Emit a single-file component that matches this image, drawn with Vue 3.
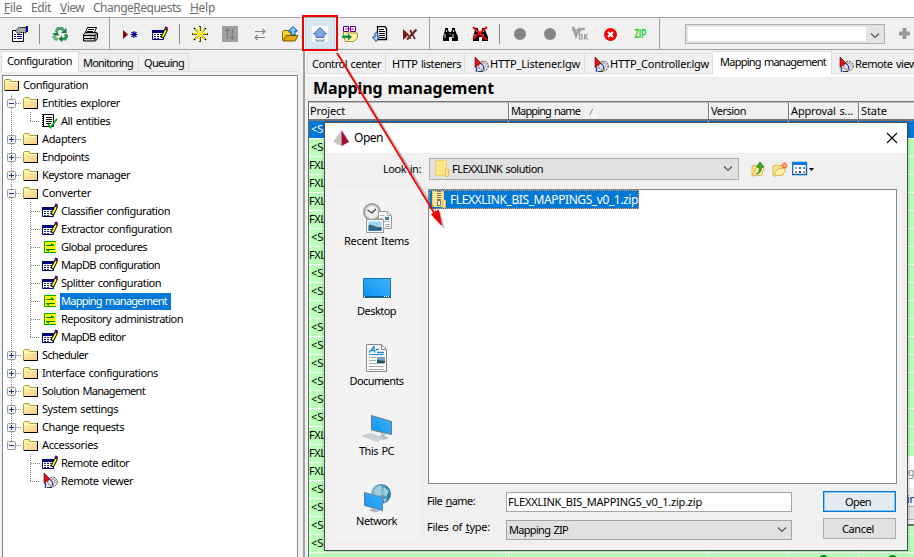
<script setup>
// Spreads or tightens a label so that it takes the given number of pixels.
const vFit = {
  mounted(el, { value }) {
    const n = el.textContent.length
    if (value && n) el.style.letterSpacing = (value - el.getBoundingClientRect().width) / n + 'px'
  },
}

const menu = [
  { k: 'F', rest: 'ile', w: 18 },
  { k: '', rest: 'Edit', w: 20 },
  { k: 'V', rest: 'iew', w: 24 },
  { pre: 'Change', k: 'R', rest: 'equests', w: 88 },
  { k: 'H', rest: 'elp', w: 25 },
]

const toolbar = [
  'props', '|', 'recycle', 'printer', '||', 'play', 'table', '|', 'star', 'sort', 'swap', 'folderup',
  'upload', 'export', 'doc', 'del', '||', 'find', 'findx', '|', 'dot', 'dot', 'vok', 'stop', 'zip', '||',
]

const leftTabs = [
  { t: 'Configuration', w: 65, on: true },
  { t: 'Monitoring', w: 50 },
  { t: 'Queuing', w: 40 },
]

// g: guide cells drawn before the icon; p/m expander, v vertical, t branch, l last branch, e empty
const tree = [
  { t: 'Configuration', w: 65, i: 'folder', g: [] },
  { t: 'Entities explorer', w: 78, i: 'folder', g: ['m'] },
  { t: 'All entities', w: 49, i: 'entities', g: ['v', 'l'] },
  { t: 'Adapters', w: 44, i: 'folder', g: ['p'] },
  { t: 'Endpoints', w: 47, i: 'folder', g: ['p'] },
  { t: 'Keystore manager', w: 88, i: 'folder', g: ['p'] },
  { t: 'Converter', w: 49, i: 'folder', g: ['m'] },
  { t: 'Classifier configuration', w: 109, i: 'table', g: ['v', 't'] },
  { t: 'Extractor configuration', w: 111, i: 'table', g: ['v', 't'] },
  { t: 'Global procedures', w: 86, i: 'arrows', g: ['v', 't'] },
  { t: 'MapDB configuration', w: 99, i: 'table', g: ['v', 't'] },
  { t: 'Splitter configuration', w: 100, i: 'table', g: ['v', 't'] },
  { t: 'Mapping management', w: 106, i: 'arrows', g: ['v', 't'], sel: true },
  { t: 'Repository administration', w: 122, i: 'arrows', g: ['v', 't'] },
  { t: 'MapDB editor', w: 64, i: 'table', g: ['v', 'l'] },
  { t: 'Scheduler', w: 46, i: 'folder', g: ['p'] },
  { t: 'Interface configurations', w: 116, i: 'folder', g: ['p'] },
  { t: 'Solution Management', w: 103, i: 'folder', g: ['p'] },
  { t: 'System settings', w: 76, i: 'folder', g: ['p'] },
  { t: 'Change requests', w: 82, i: 'folder', g: ['p'] },
  { t: 'Accessories', w: 56, i: 'folder', g: ['x'] },
  { t: 'Remote editor', w: 68, i: 'table', g: ['e', 't'] },
  { t: 'Remote viewer', w: 72, i: 'remote', g: ['e', 'l'] },
]

const rightTabs = [
  { t: 'Control center', w: 69, c: 'a' },
  { t: 'HTTP listeners', w: 69, c: 'b' },
  { t: 'HTTP_Listener.lgw', w: 90, c: 'c', icon: true },
  { t: 'HTTP_Controller.lgw', w: 99, c: 'd', icon: true },
  { t: 'Mapping management', w: 106, c: 'e', on: true },
  { t: 'Remote viewer', w: 72, c: 'f', icon: true },
]

const columns = [
  { t: 'Project', w: 35, c: 'wide' },
  { t: 'Mapping name', w: 69, c: 'wide', sort: true },
  { t: 'Version', w: 35, c: 'mid' },
  { t: 'Approval s...', w: 62, c: 'small' },
  { t: 'State', w: 26, c: 'last' },
]

const kinds = 'SSFFFFSFSSSSSSSSSFFFSSSS '.split('')
const projects = { S: '<Solution>', F: 'FXL', ' ': '' }

const places = [
  { t: 'Recent Items', w: 65, i: 'recent' },
  { t: 'Desktop', w: 39, i: 'desktop' },
  { t: 'Documents', w: 54, i: 'documents' },
  { t: 'This PC', w: 35, i: 'pc' },
  { t: 'Network', w: 41, i: 'network' },
]
</script>

<template>
  <div class="app">
    <svg class="defs" width="0" height="0">
      <defs>
        <linearGradient id="fy" x1="0" y1="0" x2="1" y2="1">
          <stop offset="0" stop-color="#fff9a8" /><stop offset="1" stop-color="#f6c98a" />
        </linearGradient>
        <linearGradient id="blue" x1="0" y1="1" x2="1" y2="0">
          <stop offset="0" stop-color="#0c93f2" /><stop offset="1" stop-color="#43b2fa" />
        </linearGradient>
        <radialGradient id="globeg" cx=".35" cy=".4">
          <stop offset="0" stop-color="#c3e4f2" /><stop offset="1" stop-color="#2e7fa6" />
        </radialGradient>
      </defs>
      <symbol id="folder" viewBox="0 0 16 16">
        <path d="M.5 13.500V3.500l1-1h4.500l1 2h7.500v9z" fill="url(#fy)" stroke="#a8a030" />
        <path d="M1.500 5.500h12" stroke="#fffbd0" />
        <path d="M14.500 4v9.500H1" fill="none" stroke="#000" />
      </symbol>
      <symbol id="entities" viewBox="0 0 16 16">
        <path d="M1.500 1.500h10v12h-10z" fill="#fff" stroke="#000" />
        <path d="M1 1v13" stroke="#000" stroke-dasharray="1 1" stroke-width="2" />
        <path d="M4 4.500h6M4 6.500h6M4 8.500h6M4 10.500h5" stroke="#000" />
        <path d="M6 11l2.500 3.500L15 6" fill="none" stroke="#00a020" stroke-width="1.700" />
      </symbol>
      <symbol id="table" viewBox="0 0 16 16">
        <path d="M.5 4.500h11v9H.5z" fill="#fff" stroke="#000080" />
        <path d="M0 4h12v3H0z" fill="#000080" />
        <path d="M2 8.500h8M2 10.500h8M2 12.500h6" stroke="#222268" stroke-dasharray="2 1" />
        <path d="M10 12l4.500-9" stroke="#000" stroke-width="3.600" />
        <path d="M10.500 11l3.500-7" stroke="#ffff20" stroke-width="1.700" />
        <path d="M13.700 3l1.300-2" stroke="#600060" stroke-width="3" />
      </symbol>
      <symbol id="arrows" viewBox="0 0 16 16">
        <path d="M2 2h12v12H2z" fill="#ff0" />
        <path d="M2.500 14V2.500H14M2 13.500h12" fill="none" stroke="#00b000" />
        <path d="M4 6.500h8M4 10.500h9" stroke="#008000" />
        <path d="M9 4l3.500 2.500H9zM7 13l-3.500-2.500H7z" fill="#008000" />
      </symbol>
      <symbol id="remote" viewBox="0 0 16 16">
        <circle cx="10.500" cy="9" r="4.800" fill="#e2e2e2" stroke="#555" stroke-dasharray="2 .8" />
        <path d="M8 7c3-2 5 0 6 1M8 12c2 0 4-1 5-3" fill="none" stroke="#999" />
        <path d="M6.500 6l3.500 2 1 5" fill="none" stroke="#2030c0" />
        <path d="M2 0l6 6-6 4.500z" fill="#e01018" stroke="#500" stroke-width=".6" />
        <path d="M3.500 10v5" stroke="#3040c0" stroke-width="1.500" /><path d="M5 14.500h5" stroke="#333" />
      </symbol>
      <symbol id="props" viewBox="0 0 16 16">
        <path d="M.5 4.500h11v11H.5z" fill="#fff" stroke="#000" />
        <path d="M2 8.500h2M5 8.500h5M2 10.500h2M5 10.500h5M2 12.500h2M5 12.500h5" stroke="#000080" />
        <path d="M3 5l4-3.500h7v5H9l-3 1z" fill="#aaa" stroke="#000" stroke-dasharray="1.500 .6" />
        <path d="M14 0h2v6h-2z" fill="#0000c0" />
      </symbol>
      <symbol id="recycle" viewBox="0 0 16 16">
        <path d="M4 6l2-3.500h4l1.500 2" fill="none" stroke="#4aa468" stroke-width="3.200" />
        <path d="M9 7h5.500V2z" fill="#147a38" />
        <path d="M13.500 8l1 2.500-1.500 2.500h-3" fill="none" stroke="#279c4e" stroke-width="3.200" />
        <path d="M10 9.500V16l-3.500-3z" fill="#147a38" />
        <path d="M6 13H3.500L2 11l1.500-3" fill="none" stroke="#6aba80" stroke-width="3.200" />
        <path d="M0 8l5.500-2L7 10z" fill="#147a38" />
      </symbol>
      <symbol id="printer" viewBox="0 0 16 16">
        <path d="M5.500 1.500h9l-2.500 6H3z" fill="#fff" stroke="#000" />
        <path d="M6 3.500h6M5 5.500h6" stroke="#000" />
        <path d="M1.500 8.500l2-2h11l1 1v5l-2 2.500h-12z" fill="#bbb" stroke="#000" />
        <path d="M1 9.500h12v5M1 12.500h12M13 9l3-2" fill="none" stroke="#000" />
        <path d="M3 11h5" stroke="#fff" />
      </symbol>
      <symbol id="play" viewBox="0 0 16 16">
        <path d="M1 4l5 4.500L1 13z" fill="#900000" />
        <path d="M12 5v7M8.500 8.500h7M9.500 6l5 5M14.500 6l-5 5" stroke="#000080" stroke-width="1.100" />
      </symbol>
      <symbol id="star" viewBox="0 0 16 16">
        <path d="M8 0v5M8 11v5M0 8h5M11 8h5M2 2l4 4M10 10l4 4M14 2l-4 4M6 10l-4 4" stroke="#000" stroke-width="1.600" />
        <path d="M7.500 1v14M1 7.500h14M3 3l10 10M13 3L3 13" stroke="#fff000" stroke-width="1.400" />
      </symbol>
      <symbol id="sort" viewBox="0 0 16 16">
        <path d="M0 0h16v16H0z" fill="#a0a0a0" />
        <path d="M5.500 13V3M3.500 5l2-2 2 2M10.500 3v10M8.500 11l2 2 2-2" fill="none" stroke="#7c7c7c" stroke-width="1.300" />
      </symbol>
      <symbol id="swap" viewBox="0 0 16 16">
        <path d="M3 5.500h10M10.500 3L13 5.500 10.500 8M13 11.500H3M5.500 9L3 11.500 5.500 14" fill="none" stroke="#858585" stroke-width="1.100" />
      </symbol>
      <symbol id="folderup" viewBox="0 0 16 16">
        <path d="M.5 14.500v-9l1-1H6l1 2h5v3" fill="#ffd52a" stroke="#8a6900" />
        <path d="M1 15l3-5.500h12L13 15z" fill="#e6a90c" stroke="#7a5800" />
        <path d="M11 .5l4.500 4.500H13v4H9V5H6.500z" fill="#75cfff" stroke="#104a9c" />
      </symbol>
      <symbol id="upload" viewBox="0 0 16 16">
        <path d="M0 0h16v16H0z" fill="#fff" />
        <path d="M8 1.500L14.500 8H12v3.500H4V8H1.500z" fill="#82a7e4" stroke="#3f69bd" />
        <path d="M4 13v2h8v-2" fill="#ddd" stroke="#7186ad" />
      </symbol>
      <symbol id="export" viewBox="0 0 16 16">
        <path d="M1.500 9V6l2-1 2 2h10v5l-4 3.500h-8z" fill="#fff2a0" stroke="#b08a36" />
        <path d="M1.500.500h5v5h-5zM8.500.500h5v5h-5z" fill="#fff" stroke="#50008c" />
        <path d="M3 3h9" stroke="#d000c8" />
        <path d="M0 9.500h6V7.500l4 3.500-4 3.500v-2.500H0z" fill="#1a8a50" />
      </symbol>
      <symbol id="doc" viewBox="0 0 16 16">
        <path d="M5.500.5h7l2 2v11h-9z" fill="#fff" stroke="#000" stroke-width="1.300" />
        <path d="M7 3.500h5M7 5.500h6M7 7.500h6M7 9.500h6M7 11.500h6" stroke="#000" />
        <path d="M3 7v4H.5L4 15.500 7.500 11H5.500V7z" fill="#a9d6ff" stroke="#205090" />
      </symbol>
      <symbol id="del" viewBox="0 0 16 16">
        <path d="M1 3l6 5.500L1 14z" fill="#7b1818" />
        <path d="M5 13.500l9.500-10" stroke="#7a1c1c" stroke-width="2.200" />
        <path d="M8 4l5 9" stroke="#7a1c1c" stroke-width="1.600" />
        <path d="M6 9l3 4" stroke="#444" stroke-width="1.200" />
      </symbol>
      <symbol id="find" viewBox="0 0 16 16">
        <path d="M3 2h3v2l1 2h2l1-2V2h3v2l3 7v4h-6v-4H7v4H1v-4l2-7z" fill="#000" />
        <path d="M3 8v4M11 8v4M4.500 4v2M11.500 4v2M7.500 8h1" stroke="#e0e0e0" />
      </symbol>
      <symbol id="findx" viewBox="0 0 16 16">
        <use href="#find" width="16" height="16" />
        <path d="M1 1l14 13M15 1L1 13" stroke="#f00000" stroke-width="2" />
      </symbol>
      <symbol id="dot" viewBox="0 0 16 16"><circle cx="8" cy="8" r="6" fill="#858585" /></symbol>
      <symbol id="vok" viewBox="0 0 16 16">
        <path d="M1 1l3 9 3-7h6" fill="none" stroke="#a2a2a2" stroke-width="2.500" />
        <path d="M0 4h8M9 2L7 8" fill="none" stroke="#a2a2a2" stroke-width="1.500" />
        <path d="M7.500 8.500H10v4.500H7.500zM12.500 8v5.500M15.500 8L13 10.700l2.800 2.800" fill="none" stroke="#999" stroke-width="1.200" />
      </symbol>
      <symbol id="stop" viewBox="0 0 16 16">
        <circle cx="8.500" cy="8.500" r="6.500" fill="#f00000" />
        <path d="M6 6l5 5M11 6l-5 5" stroke="#fff" stroke-width="2.200" />
      </symbol>
      <symbol id="recent" viewBox="0 0 32 32">
        <circle cx="11" cy="11" r="8" fill="#f0f0f0" stroke="#a0a0a0" stroke-width="2.200" />
        <circle cx="11" cy="11" r="6" fill="none" stroke="#aaa" stroke-dasharray="1 2.140" />
        <path d="M6.500 9l4.500 3 4-4" fill="none" stroke="#444" stroke-width="1.200" />
        <path d="M17.500 10.500h9l4 4v13h-13z" fill="#fafafa" stroke="#999" />
        <path d="M26.500 10.500v4h4M19 14.500h4M19 17.500h3M19 20.500h9M24 23.500h5M24 25.500h5" fill="none" stroke="#aaa" />
        <path d="M24 16h4v3h-4z" fill="#337caf" />
        <path d="M5.500 18.500h17v13h-17z" fill="#f7f7f7" stroke="#999" />
        <path d="M7.500 20.500h13v9h-13z" fill="#a2d5f5" />
        <path d="M7.500 24c5-1 6 3 13 2v3.500h-13z" fill="#366d7d" /><path d="M7.500 28l13-1v2.500h-13z" fill="#215ea0" />
      </symbol>
      <symbol id="desktop" viewBox="0 0 32 32">
        <path d="M2.500 7.500h27v19h-27z" fill="url(#blue)" stroke="#1772b2" />
        <path d="M2 25.500h28" stroke="#15567f" /><path d="M3 25.500h2M23 25.500h5" stroke="#fff" stroke-dasharray="1 1" />
      </symbol>
      <symbol id="documents" viewBox="0 0 32 32">
        <path d="M5.500 3.500h15l5 5v22h-20z" fill="#fbfbfb" stroke="#888" />
        <path d="M20.500 3.500v5h5" fill="none" stroke="#888" />
        <path d="M8 13.500h15" stroke="#209bd6" /><path d="M8 11.500l5-6 1 6M10 9.500h4M15 8.500h3M16 11.500h7" fill="none" stroke="#2289c4" stroke-width="1.300" />
        <path d="M8 16.500h7M8 19.500h7M8 22.500h15M8 25.500h15M8 28.500h15" stroke="#aaa" />
        <path d="M16 16h8v6h-8z" fill="#6fa4c6" /><path d="M16 19l8 1v2h-8z" fill="#244d69" />
      </symbol>
      <symbol id="pc" viewBox="0 0 32 32">
        <path d="M10.500 4.500l20 6v13l-20-4.500z" fill="url(#blue)" stroke="#6c7d88" />
        <path d="M20 22v3l-4 2 7 2 5-2-4-2v-2z" fill="#b5bdc2" />
        <path d="M1 25l8-2.500 14 4-7 4z" fill="#d7dadb" stroke="#b4b7b9" stroke-dasharray="1 1" />
        <path d="M5 25l11 3.500M8 23.500l12 4" stroke="#aaa" stroke-dasharray="1 1" />
      </symbol>
      <symbol id="network" viewBox="0 0 32 32">
        <circle cx="20" cy="13" r="10" fill="url(#globeg)" />
        <path d="M14 8l5-4 2 3-3 3 3 3-5 2zM23 6l5 4-3 6-3-3zM22 18l4-1-2 5z" fill="#9fcfdf" />
        <path d="M3.500 11.500l18 5v13l-18-5z" fill="url(#blue)" stroke="#668498" />
        <path d="M12 27l-4 2.500 6 2 5-1.500-4-2z" fill="#aeb7bc" />
      </symbol>
    </svg>

    <div class="menubar">
      <span v-for="m in menu" :key="m.rest" v-fit="m.w" class="lbl">{{ m.pre }}<u>{{ m.k }}</u>{{ m.rest }}</span>
    </div>

    <div class="toolbar">
      <template v-for="(b, n) in toolbar" :key="n">
        <i v-if="b === '|'" class="sep"></i>
        <i v-else-if="b === '||'" class="sep tall"></i>
        <span v-else class="btn" :class="{ hover: b === 'upload' }">
          <b v-if="b === 'zip'" class="zip">ZIP</b>
          <svg v-else class="i16"><use :href="'#' + b" /></svg>
        </span>
      </template>
      <div class="quick"><i></i><svg width="18" height="16"><path d="M5 6.500l4 4 4-4" /></svg></div>
      <svg class="plus" width="13" height="13"><path d="M6.500 1v11M1 6.500h11" /></svg>
    </div>

    <div class="main">
      <div class="left">
        <div class="ltabs">
          <span v-for="t in leftTabs" :key="t.t" class="ltab" :class="{ on: t.on }"><span v-fit="t.w" class="lbl">{{ t.t }}</span></span>
        </div>
        <div class="tree">
          <div v-for="(r, n) in tree" :key="n" class="node">
            <svg v-for="(g, k) in r.g" :key="k" class="guide" width="19" height="18">
              <template v-if="'pmx'.includes(g)">
                <path class="dots" :d="g === 'x' ? 'M8.500 0v9' : 'M8.500 0v18'" />
                <path class="dots" d="M13 9.500h6" />
                <rect x="4.500" y="5.500" width="8" height="8" rx="1" fill="#f3f3f3" stroke="#999" />
                <path d="M6 9.500h5" stroke="#203c90" /><path v-if="g === 'p'" d="M8.500 7v5" stroke="#203c90" />
              </template>
              <path v-else-if="g === 'v'" class="dots" d="M8.500 0v18" />
              <path v-else-if="g === 't'" class="dots" d="M8.500 0v18M9 9.500h9" />
              <path v-else-if="g === 'l'" class="dots" d="M8.500 0v9M8 9.500h10" />
            </svg>
            <svg class="i16"><use :href="'#' + r.i" /></svg>
            <span class="name" :class="{ sel: r.sel }"><span v-fit="r.w" class="lbl">{{ r.t }}</span></span>
          </div>
        </div>
      </div>

      <div class="right">
        <div class="rtabs">
          <span v-for="t in rightTabs" :key="t.t" class="rtab" :class="[t.c, { on: t.on }]">
            <svg v-if="t.icon" class="i16"><use href="#remote" /></svg><span v-fit="t.w" class="lbl">{{ t.t }}</span>
          </span>
        </div>
        <div class="title"><span v-fit="181" class="lbl">Mapping management</span></div>
        <div class="grid">
          <div class="head">
            <span v-for="c in columns" :key="c.t" class="col" :class="c.c">
              <span v-fit="c.w" class="lbl">{{ c.t }}</span>
              <svg v-if="c.sort" class="asc" width="8" height="8"><path d="M.5 7.500L4 .5" stroke="#888" /><path d="M4 .5l3.500 7H.5" stroke="#fff" fill="none" /></svg>
            </span>
          </div>
          <div v-for="(k, n) in kinds" :key="n" class="row" :class="{ cur: n === 0 }">
            <span v-for="c in columns" :key="c.t" class="cell" :class="c.c">
              <template v-if="c.c === 'wide' && !c.sort"><span class="proj" :class="{ s: k === 'S' }">{{ projects[k] }}</span></template>
              <i v-if="k === ' ' && (c.c === 'small' || c.c === 'last')" class="ok"></i>
            </span>
          </div>
        </div>
      </div>
    </div>

    <div class="behind"><div class="bt">ng</div><div class="bb">ding</div><i></i></div>

    <div class="dialog">
      <div class="dtitle">
        <svg width="16" height="16"><path d="M8.500 0L0 12l8.500 4z" fill="#c6c6c6" /><path d="M8.500 0L16 12l-7.500 4z" fill="#9c1238" /></svg>
        <span v-fit="29" class="lbl seg">Open</span>
        <svg class="x" width="12" height="12"><path d="M1 1l10 10M11 1L1 11" /></svg>
      </div>
      <div class="look">
        <span class="lklabel"><span v-fit="38" class="lbl">Look <u>i</u>n:</span></span>
        <div class="combo">
          <svg width="14" height="18"><path d="M.5.500h11v15H.5z" fill="#ffe58c" stroke="#f0cf6c" /><path d="M10.500 9h3v7.500h-3z" fill="#ffe58c" stroke="#e7bd4f" /></svg>
          <span v-fit="91" class="lbl">FLEXXLINK solution</span>
          <svg class="chev" width="10" height="8"><path d="M1 1.500l4 4 4-4" /></svg>
        </div>
        <svg class="up" width="16" height="16">
          <path d="M1 14V5l4-1 1 1 5-1v9l-9 2z" fill="#ffe287" stroke="#dcb654" /><path d="M2 15l3-8 8-1-2 8z" fill="#fff0a8" stroke="#dcb654" />
          <path d="M5 13c3-1 3.500-3 3.500-7H5.500L9 1l4 5h-2.500c0 4-1 6-5.500 7z" fill="#3fae28" stroke="#1d7a1c" stroke-width=".8" />
        </svg>
        <svg class="new" width="16" height="16">
          <path d="M1 14V5l4-1 1 1 5-1v9l-9 2z" fill="#ffe287" stroke="#dcb654" /><path d="M2 15l3-7 9-1-3 7z" fill="#fff0a8" stroke="#dcb654" />
          <path d="M12.500 1.500v6M9.500 4.500h6M10.500 2.500l4 4M14.500 2.500l-4 4" stroke="#ff502d" stroke-width="1.200" /><circle cx="12.500" cy="4.500" r="1.200" fill="#ffe080" />
        </svg>
        <svg class="view" width="22" height="16">
          <path d="M.5 1.500h14v12H.5z" fill="#fff" stroke="#0869cc" stroke-width="1.400" /><path d="M0 1h15v3H0z" fill="#0878df" />
          <path d="M11 6h2v2h-2z" fill="#36a96b" /><path d="M3 6h2v2H3z" fill="#a6a6c8" /><path d="M7 6h2v2H7z" fill="#1479db" />
          <path d="M3 10h2v2H3z" fill="#ff6b45" /><path d="M7 10h2v2H7z" fill="#123993" /><path d="M11 10h2v2h-2z" fill="#ce9b18" />
          <path d="M17 7h5l-2.500 3z" fill="#000" />
        </svg>
      </div>
      <div class="body">
        <div class="places">
          <div v-for="p in places" :key="p.t" class="place">
            <svg width="32" height="32"><use :href="'#' + p.i" /></svg>
            <span v-fit="p.w" class="lbl">{{ p.t }}</span>
          </div>
        </div>
        <div class="content">
          <div class="files">
            <div class="file">
              <svg width="15" height="17"><path d="M.5.500h11v15H.5z" fill="#ffe58c" stroke="#f0cf6c" /><path d="M10.500 9h3v7.500h-3z" fill="#ffe58c" stroke="#e7bd4f" /><path d="M7 0v9" stroke="#777" stroke-width="4" stroke-dasharray="1 1" /><path d="M5.500 9.500h3v5h-3z" fill="#eee" stroke="#777" /></svg>
              <span v-fit="188" class="lbl seg">FLEXXLINK_BIS_MAPPINGS_v0_1.zip</span>
            </div>
          </div>
          <div class="form">
            <span class="fl"><span v-fit="48" class="lbl">File <u>n</u>ame:</span></span>
            <div class="input"><span v-fit="194" class="lbl">FLEXXLINK_BIS_MAPPINGS_v0_1.zip.zip</span></div>
            <div class="push primary"><span v-fit="26" class="lbl">Open</span></div>
            <span class="fl type"><span v-fit="63" class="lbl">Files of <u>t</u>ype:</span></span>
            <div class="input sel"><span v-fit="59" class="lbl">Mapping ZIP</span><svg class="chev" width="10" height="8"><path d="M1 1.500l4 4 4-4" /></svg></div>
            <div class="push cancel"><span v-fit="32" class="lbl">Cancel</span></div>
          </div>
        </div>
      </div>
    </div>

    <div class="callout"></div>
    <svg class="arrow" width="130" height="190">
      <g class="shadow"><path d="M9 5l102 165" /><path class="tip" d="M114 178l-11-11 7-4.500z" /></g>
      <path d="M7 3l99 163" /><path class="tip" d="M111.500 175l-10-10.500 7-4.500z" />
    </svg>
  </div>
</template>

<style>
body { background: #fff; overflow: hidden; }
</style>

<style scoped>
* { box-sizing: border-box; }
.app { position: relative; width: 914px; height: 557px; overflow: hidden; display: flex; flex-direction: column; background: #f0f0f0; color: #000; font: 11px/14px "Noto Sans", "Liberation Sans", sans-serif; }
.defs { position: absolute; }
.lbl { display: inline-block; white-space: nowrap; flex: none; word-spacing: 1px; }
.seg { font-size: 12px; }
.i16 { width: 16px; height: 16px; flex: none; display: block; }
u { text-underline-offset: 1px; }

.menubar { height: 17px; flex: none; display: flex; gap: 9px; padding-left: 4px; background: #fff; color: #6d6d6d; font-size: 12px; line-height: 16px; }
.toolbar { height: 33px; flex: none; display: flex; align-items: center; padding-left: 5px; border-top: 1px solid #a0a0a0; border-bottom: 1px solid #a0a0a0; }
.btn { width: 30px; height: 30px; display: flex; align-items: center; justify-content: center; flex: none; }
.btn.hover { background: #d8e6f2; border: 1px solid #c0dcf3; }
.sep { width: 1px; height: 20px; margin: 0 5px 0 4px; background: #8c8c8c; flex: none; }
.sep.tall { height: 31px; background: #a0a0a0; }
.zip { color: #22cc22; font: bold 12px/14px "Liberation Sans", sans-serif; transform: scaleX(.62); }
.quick { width: 200px; height: 20px; margin-left: 20px; border: 1px solid #adadad; background: #e3e3e3; display: flex; padding: 2px 0 2px 2px; }
.quick i { width: 178px; background: #fff; }
.quick path, .chev path { fill: none; stroke: #555; stroke-width: 1.2; }
.plus { margin-left: 13px; flex: none; }
.plus path { stroke: #999; stroke-width: 4; }

.main { flex: 1; min-height: 0; display: flex; }
.left { width: 303px; flex: none; display: flex; flex-direction: column; padding: 1px 5px 0 1px; }
.ltabs { height: 21px; display: flex; align-items: flex-end; flex: none; border-bottom: 1px solid #dcdcdc; }
.ltab { height: 18px; padding: 2px 4px 0; border: 1px solid #d9d9d9; border-left: 0; border-bottom: 0; display: flex; }
.ltab:nth-child(2) { width: 60px; }
.ltab:nth-child(3) { width: 50px; padding-left: 5px; }
.ltab.on { width: 78px; height: 21px; margin-bottom: -1px; padding: 2px 0 0 5px; background: #fff; border-left: 1px solid #d9d9d9; }
.tree { flex: 1; margin: 3px 0 0 1px; width: 296px; background: #fff; border: 1px solid #828790; border-bottom: 0; padding-left: 1px; }
.node { height: 18px; display: flex; align-items: center; }
.guide { flex: none; display: block; margin-left: -1px; margin-right: 1px; }
.dots { fill: none; stroke: #888; stroke-dasharray: 1 1; shape-rendering: crispEdges; }
.name { height: 17px; padding: 1px 3px; line-height: 14px; }
.name.sel { background: #0078d7; color: #fff; margin-left: 2px; padding: 1px 4px 1px 1px; }

.right { flex: 1; min-width: 0; display: flex; flex-direction: column; border-left: 2px solid #a0a0a0; padding: 1px 0 0 2px; }
.rtabs { height: 26px; flex: none; display: flex; align-items: flex-start; padding-top: 2px; overflow: hidden; border-bottom: 3px solid #fff; }
.rtab { height: 21px; flex: none; display: flex; padding: 3px 0 0 5px; border: 1px solid #dcdcdc; border-left: 0; }
.rtab .i16 { margin: 0 1px 0 2px; }
.a { width: 79px; border-left: 1px solid #dcdcdc; padding-left: 4px; }
.b { width: 79px; padding-left: 6px; }
.c { width: 120px; padding-left: 6px; }
.d { width: 128px; padding-left: 6px; }
.e { width: 119px; }
.f { width: 120px; padding-left: 4px; }
.rtab.on { background: #fff; height: 23px; margin-top: -2px; padding-top: 3px; padding-left: 7px; border-bottom: 0; }
.title { height: 24px; flex: none; padding-left: 6px; font: bold 16px/22px "Noto Sans", sans-serif; }
.grid { flex: 1; min-height: 0; overflow: hidden; margin-left: 1px; border-left: 1px solid #666; border-top: 1px solid #777; background: #fff; }
.head { height: 19px; display: flex; background: #f0f0f0; border-bottom: 2px solid #777; }
.col { border-right: 1px solid #777; border-left: 1px solid #fff; border-top: 1px solid #bbb; padding: 1px 0 0 1px; display: flex; flex: none; }
.col.wide:first-child { padding-left: 0; }
.asc { margin: 4px 0 0 9px; }
.wide { width: 200px; }
.mid { width: 80px; }
.small { width: 70px; }
.last { width: 100px; }
.row { height: 18px; display: flex; background: #fff; padding-bottom: 1px; }
.cell { flex: none; background: #baffba; border-right: 1px solid #fff; overflow: hidden; line-height: 16px; }
.cur .cell { background: #0078d7; color: #fff; }
.proj { letter-spacing: -.4px; }
.proj.s { padding-left: 2px; letter-spacing: 0; }
.ok { display: block; width: 9px; height: 9px; margin: 2px auto 0; border-radius: 50%; background: #078b0b; }
.last .ok { margin-left: 29px; }

.behind { position: absolute; left: 860px; top: 456px; width: 60px; height: 70px; background: #f0f0f0; border-bottom: 2px solid #707070; padding-left: 40px; }
.bt { height: 32px; margin-left: -40px; padding: 9px 0 0 41px; background: #fff; color: #8a8a8a; }
.bb { color: #102068; padding-top: 4px; }
.behind i { display: block; height: 14px; margin-left: -20px; border: 1px solid #adadad; background: #e1e1e1; }

.dialog { position: absolute; left: 324px; top: 122px; width: 584px; height: 429px; background: #f0f0f0; border: 1px solid #4a4f55; box-shadow: 0 0 4px rgba(0, 0, 0, .25); display: flex; flex-direction: column; }
.dtitle { height: 30px; flex: none; background: #fff; display: flex; align-items: center; padding: 0 9px 0 8px; gap: 5px; }
.x { margin-left: auto; }
.x path { stroke: #000; stroke-width: 1.1; }
.look { height: 36px; flex: none; display: flex; align-items: center; padding-bottom: 4px; }
.lklabel { width: 104px; padding-left: 58px; }
.combo { width: 310px; height: 22px; background: #e1e1e1; border: 1px solid #adadad; display: flex; align-items: center; padding: 0 5px; gap: 3px; }
.chev { margin-left: auto; flex: none; }
.up { margin-left: 12px; }
.new { margin-left: 5px; }
.view { margin-left: 4px; }
.body { flex: 1; display: flex; }
.places { width: 85px; height: 352px; margin-left: 10px; background: #f3f3f3; padding-top: 12px; }
.place { height: 70px; display: flex; flex-direction: column; align-items: center; padding-right: 2px; line-height: 15px; }
.content { margin-left: 8px; width: 470px; }
.files { height: 295px; width: 469px; background: #fff; border: 1px solid #828790; }
.file { width: 210px; height: 19px; background: #0078d7; color: #fff; outline: 1px dotted #f59c45; outline-offset: -1px; display: flex; align-items: center; padding-left: 3px; gap: 3px; }
.form { display: grid; grid-template-columns: 78px 286px 104px; row-gap: 7px; padding-top: 7px; justify-content: start; }
.fl { padding-top: 3px; margin-left: -1px; }
.type { padding-top: 1px; }
.input { width: 286px; height: 20px; border: 1px solid #a5a5a5; background: #fff; display: flex; align-items: center; padding: 0 4px 0 1px; margin-top: 1px; }
.input.sel { background: #e1e1e1; padding-left: 2px; }
.push { margin-left: 31px; width: 73px; height: 21px; border: 1px solid #adadad; background: #e1e1e1; display: flex; align-items: center; justify-content: center; padding-right: 3px; }
.cancel { margin-top: -1px; }
.primary { border: 1px solid #0078d7; box-shadow: inset 0 0 0 1px #8dc3ef; background: #e3eaf2; }

.callout { position: absolute; left: 302px; top: 15px; width: 36px; height: 36px; border: 2px solid #f00000; }
.arrow { position: absolute; left: 330px; top: 50px; }
.arrow path { fill: none; stroke: #f40000; stroke-width: 1.7; }
.arrow .tip { fill: #f40000; stroke-width: 1; }
.shadow { opacity: .35; }
.shadow path, .arrow .shadow .tip { stroke: #555; }
.arrow .shadow .tip { fill: #555; }
</style>
